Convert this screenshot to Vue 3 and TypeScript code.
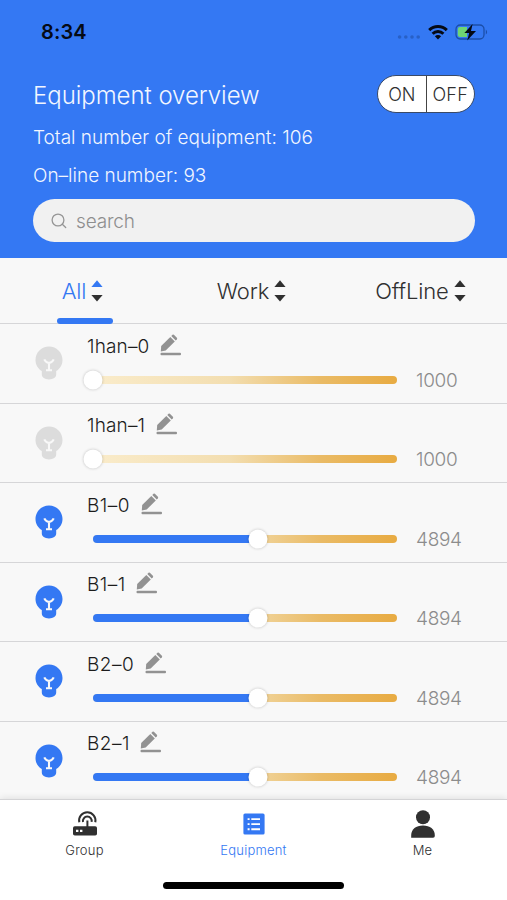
<script setup lang="ts">
import { ref } from 'vue'

interface Device {
  name: string
  value: number
  on: boolean
}

const MIN = 1000
const MAX = 8170

const tabs = ['All', 'Work', 'OffLine']
const activeTab = ref('All')
const query = ref('')

const devices = ref<Device[]>([
  { name: '1han–0', value: 1000, on: false },
  { name: '1han–1', value: 1000, on: false },
  { name: 'B1–0', value: 4894, on: true },
  { name: 'B1–1', value: 4894, on: true },
  { name: 'B2–0', value: 4894, on: true },
  { name: 'B2–1', value: 4894, on: true },
])

const percent = (d: Device): string => `${((d.value - MIN) / (MAX - MIN)) * 100}%`
</script>

<template>
  <div class="screen">
    <header class="header">
      <div class="status">
        <span class="time">8:34</span>
        <div class="status-icons">
          <svg class="cell" width="24" height="6" viewBox="0 0 24 6" fill="#2860c6">
            <circle cx="2.6" cy="3" r="1.8" /><circle cx="8.8" cy="3" r="1.8" />
            <circle cx="15" cy="3" r="1.8" /><circle cx="21.2" cy="3" r="1.8" />
          </svg>
          <svg class="wifi" width="20" height="16" viewBox="0 0 20 16" fill="none" stroke="#050a14" stroke-width="3">
            <path d="M1.2 6.1a12.6 12.6 0 0 1 17.6 0" />
            <path d="M4.6 9.7a7.7 7.7 0 0 1 10.8 0" />
            <path d="M10 15.4l-3.1-3.1a4.4 4.4 0 0 1 6.2 0z" fill="#050a14" stroke="none" />
          </svg>
          <svg class="battery" width="34" height="18" viewBox="0 0 34 18">
            <rect x="1" y="2" width="28" height="14" rx="4.2" fill="none" stroke="#1b4ea8" stroke-width="1.3" />
            <path d="M30.8 6.4q2.6 2.6 0 5.2z" fill="#1b4ea8" />
            <path d="M5 4h7v10H5a2.2 2.2 0 0 1-2.2-2.2V6.2A2.2 2.2 0 0 1 5 4z" fill="#6fd573" />
            <path d="M17.6 1L9.4 9.9h4.8L12.2 17.400l8.800-9.400h-5z" fill="#050a14" />
          </svg>
        </div>
      </div>

      <div class="title-row">
        <h1 class="title">Equipment overview</h1>
        <div class="power">
          <button class="power-btn on">ON</button>
          <button class="power-btn off">OFF</button>
        </div>
      </div>
      <p class="stat total">Total number of equipment: 106</p>
      <p class="stat online">On–line number: 93</p>

      <label class="search">
        <svg width="16" height="16" viewBox="0 0 16 16" fill="none" stroke="#969696" stroke-width="1.3" stroke-linecap="round">
          <circle cx="7" cy="7" r="5.9" /><path d="M11.3 11.3l3.4 3.2" />
        </svg>
        <input v-model="query" class="search-input" type="text" placeholder="search" />
      </label>
    </header>

    <nav class="tabs">
      <button
        v-for="tab in tabs"
        :key="tab"
        class="tab"
        :class="[tab.toLowerCase(), { active: tab === activeTab }]"
        @click="activeTab = tab"
      >
        <span class="tab-label">{{ tab }}</span>
        <svg class="sort" width="12" height="22" viewBox="0 0 12 22">
          <path class="up" d="M6 .3L11.600 7H.4z" />
          <path d="M6 21.600L.4 15.100h11.200z" fill="#303030" />
        </svg>
      </button>
    </nav>

    <main class="list">
      <section v-for="device in devices" :key="device.name" class="device" :class="{ lit: device.on }">
        <svg class="bulb" width="28" height="34" viewBox="0 0 28 34">
          <path
            d="M14 .6C6.500.6.5 6.500.5 14c0 4.900 2.500 8.700 6.300 11.100v3.500c0 2.900 2.900 4.900 7.200 4.900s7.200-2 7.200-4.900v-3.500c3.800-2.400 6.300-6.200 6.300-11.100C27.500 6.500 21.500.6 14 .6z"
          />
          <path
            class="filament"
            d="M9.300 13.300q1.300 3 4.700 3.800q3.400-.8 4.700-3.800M14 17v7M11 24.200h6"
          />
        </svg>
        <div class="control">
          <div class="name-row">
            <span class="name">{{ device.name }}</span>
            <svg class="edit" width="21" height="22" viewBox="0 0 21 22" fill="#929292">
              <path d="M.8 17.400l.4-5.400L10.300 2.900l4.500 4.500-9.100 9.200z" />
              <path d="M11.300 2L12.500.8q.7-.6 1.400 0l3 3q.6.700 0 1.400l-1.200 1.200z" />
              <rect x=".5" y="18.700" width="20.500" height="2.600" rx="1" />
            </svg>
          </div>
          <div class="slider-row">
            <div class="track">
              <div class="fill" :style="{ width: percent(device) }"></div>
              <div class="thumb" :style="{ left: percent(device) }"></div>
            </div>
            <span class="value">{{ device.value }}</span>
          </div>
        </div>
      </section>
    </main>

    <footer class="bottom">
      <div class="nav">
        <a class="nav-item">
          <svg width="28" height="28" viewBox="0 0 28 28" fill="none" stroke="#303030">
            <path d="M8.300 12.300a8.200 8.200 0 1 1 16-.1" stroke-width="2" />
            <path d="M12 12a4.400 4.400 0 1 1 8.600-.1" stroke-width="2" />
            <path d="M16.400 10.500v7" stroke-width="2" />
            <rect x="2" y="16.200" width="24" height="9.300" rx="1.800" fill="#303030" stroke="none" />
            <path d="M5 19.700h2.400v2.400H5zM9 19.700h2.400v2.400H9z" fill="#fff" stroke="none" />
          </svg>
          <span class="nav-label group">Group</span>
        </a>
        <a class="nav-item current">
          <svg width="28" height="28" viewBox="0 0 28 28">
            <rect x="3.400" y="3.400" width="21.200" height="21.200" rx="1.600" fill="#3478f3" />
            <path d="M7.600 9.100h2M11.300 9.100h8.700M7.600 14.100h2M11.300 14.100h8.700M7.600 19.300h2M11.300 19.300h8.700" stroke="#fff" stroke-width="1.900" />
          </svg>
          <span class="nav-label equipment">Equipment</span>
        </a>
        <a class="nav-item">
          <svg width="28" height="28" viewBox="0 0 28 28" fill="#303030">
            <circle cx="14" cy="7.300" r="7" />
            <path d="M2.200 27.700v-2.500C2.200 19.200 7 15.500 14 15.500s11.800 3.700 11.800 9.700v.7q0 1.800-1.800 1.800z" />
          </svg>
          <span class="nav-label me">Me</span>
        </a>
      </div>
      <div class="home-bar"></div>
    </footer>
  </div>
</template>

<style>
body {
  margin: 0;
  overflow: hidden;
}
</style>

<style scoped>
.screen {
  width: 507px;
  height: 900px;
  display: flex;
  flex-direction: column;
  overflow: hidden;
  background: #f8f8f8;
  color: #303030;
  font-family: Inter, 'Liberation Sans', sans-serif;
  font-weight: 300;
}

button {
  padding: 0;
  border: 0;
  background: none;
  font: inherit;
  color: inherit;
}

.header {
  box-sizing: border-box;
  flex: none;
  height: 258px;
  padding: 20px 32px 0 33px;
  background: #3478f3;
  color: #f2f6ff;
}

.status {
  display: flex;
  align-items: center;
  justify-content: space-between;
  height: 24px;
  margin: 0 -14px 0 8px;
}

.time {
  color: #050a14;
  font-size: 20px;
  font-weight: 600;
  letter-spacing: 0.1px;
}

.status-icons {
  display: flex;
  align-items: center;
}

.cell {
  margin: 10px 7px 0 0;
}

.wifi {
  margin-right: 7px;
}

.title-row {
  display: flex;
  align-items: center;
  justify-content: space-between;
  height: 38px;
  margin-top: 31px;
}

.title {
  margin: 3px 0 0;
  font-size: 24px;
  font-weight: 300;
  line-height: 38px;
  letter-spacing: -0.04px;
}

.power {
  display: flex;
  box-sizing: border-box;
  width: 98px;
  height: 38px;
  border: 1.5px solid #3a4a66;
  border-radius: 19px;
  background: #fff;
  color: #303030;
  overflow: hidden;
}

.power-btn {
  flex: 1;
  font-size: 18px;
  letter-spacing: -0.2px;
}

.power-btn.off {
  border-left: 1.5px solid #444;
  letter-spacing: 0.2px;
}

.stat {
  margin: 0;
  font-size: 19px;
  line-height: 38px;
  white-space: nowrap;
}

.total {
  margin-top: 6px;
}

.search {
  display: flex;
  align-items: center;
  gap: 9px;
  box-sizing: border-box;
  height: 43px;
  margin-top: 4px;
  padding: 0 18px;
  border-radius: 22px;
  background: #f1f1f1;
}

.search-input {
  flex: 1;
  min-width: 0;
  padding: 2px 0 0;
  border: 0;
  outline: 0;
  background: transparent;
  font: inherit;
  font-size: 19px;
  letter-spacing: -0.15px;
  color: #303030;
}

.search-input::placeholder {
  color: #8e8e8e;
}

.tabs {
  display: grid;
  grid-template-columns: repeat(3, 1fr);
  flex: none;
  height: 65px;
  border-bottom: 1.5px solid #d6d6d8;
}

.tab {
  position: relative;
  display: flex;
  align-items: center;
  justify-content: center;
  gap: 5px;
  padding-right: 4px;
  font-size: 22px;
  letter-spacing: -0.15px;
}

.tab.active {
  color: #3478f3;
}

.tab.active::after {
  content: '';
  position: absolute;
  left: 57px;
  bottom: -1px;
  width: 56px;
  height: 6px;
  border-radius: 3px;
  background: #3478f3;
}

.up {
  fill: #303030;
}

.active .up {
  fill: #3478f3;
}

.list {
  flex: 1;
  min-height: 0;
  overflow: hidden;
}

.device {
  display: flex;
  box-sizing: border-box;
  height: 79.6px;
  padding-left: 35px;
  border-bottom: 1.5px solid #d6d6d8;
}

.bulb {
  flex: none;
  margin-top: 22px;
  fill: #dcdcdc;
}

.lit .bulb {
  fill: #3478f3;
}

.filament {
  fill: none;
  stroke: #f8f8f8;
  stroke-width: 2.1;
}

.control {
  flex: 1;
  padding: 8.5px 0 0 24px;
}

.name-row {
  display: flex;
  align-items: center;
  gap: 10.5px;
  height: 24px;
}

.name {
  padding-top: 4px;
  color: #1c1c1c;
  font-size: 19px;
  line-height: 24px;
  letter-spacing: 0.15px;
}

.lit .name {
  letter-spacing: 0.5px;
}

.slider-row {
  display: flex;
  align-items: center;
  gap: 19px;
  height: 24px;
  margin-top: 11px;
  padding-left: 6px;
}

.track {
  position: relative;
  width: 304px;
  height: 8px;
  border-radius: 4px;
  background: linear-gradient(90deg, #faeccb, #f3deb0 45%, #eabb66 75%, #e8ab42);
}

.fill {
  height: 100%;
  border-radius: 4px 0 0 4px;
  background: #3478f3;
}

.thumb {
  position: absolute;
  top: 50%;
  width: 19px;
  height: 19px;
  border-radius: 50%;
  background: #fff;
  box-shadow: 0 0 3px rgba(0, 0, 0, 0.24);
  transform: translate(-50%, -50%);
}

.value {
  padding-top: 2px;
  color: #8c8c8c;
  font-size: 19px;
  line-height: 24px;
  letter-spacing: -0.3px;
}

.bottom {
  position: relative;
  display: flex;
  flex-direction: column;
  align-items: center;
  flex: none;
  box-sizing: border-box;
  height: 101px;
  border-top: 1.5px solid #d4d4d6;
  background: #fff;
  box-shadow: 0 -1px 7px rgba(0, 0, 0, 0.1);
}

.nav {
  display: grid;
  grid-template-columns: repeat(3, 1fr);
  width: 100%;
  padding-top: 10px;
}

.nav-item {
  display: flex;
  flex-direction: column;
  align-items: center;
  gap: 3px;
}

.nav-item.current {
  color: #3478f3;
}

.nav-label {
  font-size: 13px;
  line-height: 18px;
  letter-spacing: 0.2px;
}

.home-bar {
  width: 181px;
  height: 7px;
  margin-top: 23px;
  border-radius: 4px;
  background: #000;
}
</style>
